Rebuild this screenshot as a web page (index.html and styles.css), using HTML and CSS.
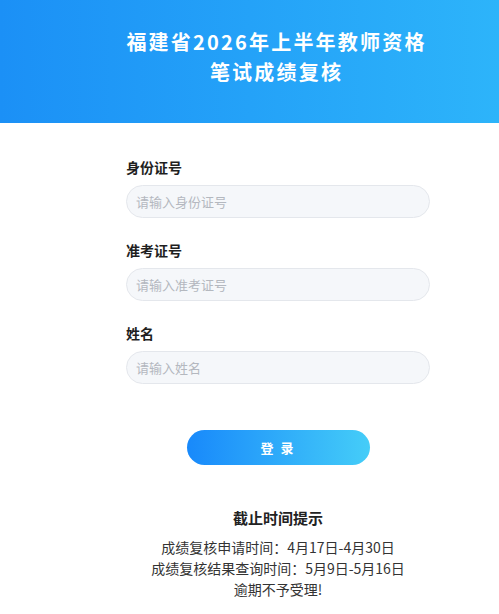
FILE: index.html
```html
<!DOCTYPE html>
<html lang="zh-CN">
<head>
<meta charset="utf-8">
<title>笔试成绩复核</title>
<link rel="stylesheet" href="styles.css">
</head>
<body>
<header class="hero">
  <h1 class="hero-title">福建省2026年上半年教师资格<br>笔试成绩复核</h1>
</header>
<main class="content">
  <form class="login-form">
    <div class="field">
      <label class="field-label">身份证号</label>
      <input class="field-input" type="text" placeholder="请输入身份证号">
    </div>
    <div class="field">
      <label class="field-label">准考证号</label>
      <input class="field-input" type="text" placeholder="请输入准考证号">
    </div>
    <div class="field">
      <label class="field-label">姓名</label>
      <input class="field-input" type="text" placeholder="请输入姓名">
    </div>
    <div class="actions">
      <button class="login-btn" type="button">登 录</button>
    </div>
  </form>
  <section class="notice">
    <h2 class="notice-title">截止时间提示</h2>
    <p class="notice-line">成绩复核申请时间：4月17日-4月30日</p>
    <p class="notice-line">成绩复核结果查询时间：5月9日-5月16日</p>
    <p class="notice-line">逾期不予受理!</p>
  </section>
</main>
</body>
</html>
```
FILE: styles.css
```css
* { box-sizing: border-box; }
html, body { margin: 0; padding: 0; background: #fff; }
body {
  font-family: "Noto Sans CJK SC", "Noto Sans", sans-serif;
  color: #222;
}
.hero {
  height: 123px;
  background: linear-gradient(90deg, #1b90f6 0%, #2db4fa 100%);
  display: flex;
  justify-content: center;
  padding-left: 54px;
  padding-top: 27px;
}
.hero-title {
  margin: 0;
  color: #fff;
  font-size: 20px;
  font-weight: 700;
  line-height: 30px;
  letter-spacing: 2.2px;
  text-align: center;
}
.content {
  width: 304px;
  margin-left: 126px;
}
.login-form {
  padding-top: 34px;
  display: flex;
  flex-direction: column;
}
.field {
  display: flex;
  flex-direction: column;
  margin-bottom: 22px;
}
.field-label {
  font-size: 14px;
  font-weight: 700;
  line-height: 20px;
  color: #1f1f1f;
  margin-bottom: 8px;
}
.field-input {
  height: 33px;
  width: 100%;
  border: 1px solid #e4e7ec;
  border-radius: 17px;
  background: #f5f7fa;
  padding: 0 9px;
  font-family: inherit;
  font-size: 13px;
  color: #333;
  outline: none;
}
.field-input::placeholder { color: #b4b8bf; }
.actions {
  display: flex;
  justify-content: center;
  padding-top: 24px;
}
.login-btn {
  width: 183px;
  height: 35px;
  border: none;
  border-radius: 18px;
  background: linear-gradient(90deg, #1889fb 0%, #45cdf8 100%);
  color: #fff;
  font-family: inherit;
  font-size: 13px;
  font-weight: 700;
  letter-spacing: 2px;
}
.notice {
  margin-top: 42px;
  text-align: center;
}
.notice-title {
  margin: 0 0 8px;
  font-size: 15px;
  font-weight: 700;
  line-height: 22px;
  color: #222;
}
.notice-line {
  margin: 0;
  font-size: 14px;
  line-height: 21px;
  color: #333;
}
```
